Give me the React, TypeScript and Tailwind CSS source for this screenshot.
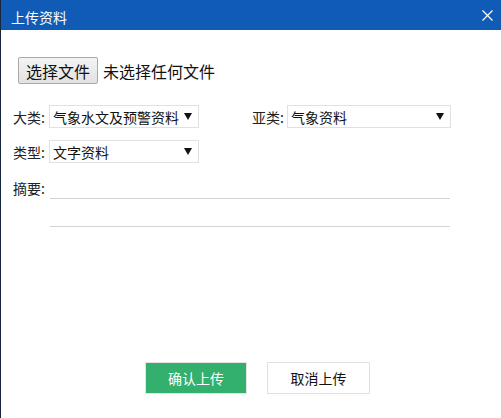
import React from "react";

const font = { fontFamily: '"Microsoft YaHei", "Noto Sans CJK SC", "Noto Sans", sans-serif' };

function Caret() {
  return (
    <svg width="8" height="7" viewBox="0 0 8 7" className="shrink-0">
      <path d="M0 0 L8 0 L4 7 Z" fill="#111" />
    </svg>
  );
}

function SelectBox({ value, width }: { value: string; width: string }) {
  return (
    <div
      className={`${width} h-[23px] border border-[#e1e1e1] bg-white flex items-center justify-between pl-[3px] pr-[6px] text-[14px] leading-none text-[#111]`}
    >
      <span>{value}</span>
      <Caret />
    </div>
  );
}

export default function App() {
  return (
    <div className="flex w-[501px] h-[418px] bg-white overflow-hidden" style={font}>
      <div className="w-px bg-[#17263d]" />
      <div className="flex-1 flex flex-col">
        <div className="h-[30px] bg-[#0f5bb5] flex items-center justify-between pl-[10px] pr-[8px] pt-[4px]">
          <span className="text-white text-[14px] leading-none">上传资料</span>
          <svg width="11" height="11" viewBox="0 0 11 11" className="-mt-[4px]">
            <path d="M0.5 0.5 L10.5 10.5 M10.5 0.5 L0.5 10.5" stroke="#fff" strokeWidth="1.2" />
          </svg>
        </div>

        <div className="flex-1 flex flex-col pl-[12px]">
          <div className="mt-[27px] flex items-center">
            <div className="ml-[5px] w-[80px] h-[27px] border border-[#a9a9a9] rounded-[2px] bg-gradient-to-b from-[#f4f4f4] to-[#e2e2e2] flex items-center justify-center text-[16px] leading-none text-[#111]">
              选择文件
            </div>
            <span className="ml-[5px] text-[16px] leading-none text-[#111]">未选择任何文件</span>
          </div>

          <div className="mt-[21px] flex items-center">
            <span className="w-[36px] text-[14px] leading-none text-[#222]">大类:</span>
            <SelectBox value="气象水文及预警资料" width="w-[150px]" />
            <span className="ml-[53px] w-[35px] text-[14px] leading-none text-[#222]">亚类:</span>
            <SelectBox value="气象资料" width="w-[164px]" />
          </div>

          <div className="mt-[12px] flex items-center">
            <span className="w-[36px] text-[14px] leading-none text-[#222]">类型:</span>
            <SelectBox value="文字资料" width="w-[150px]" />
          </div>

          <div className="mt-[17px] flex">
            <span className="w-[37px] text-[14px] leading-none text-[#222] pt-[1px]">摘要:</span>
            <div className="w-[400px] flex flex-col">
              <div className="h-[19px] border-b border-[#d3d3d3]" />
              <div className="h-[28px] border-b border-[#d3d3d3]" />
            </div>
          </div>

          <div className="mt-auto mb-[24px] flex items-center pl-[132px] gap-[20px]">
            <div className="w-[102px] h-[32px] bg-[#33b06d] border border-[#e4e4e4] flex items-center justify-center text-white text-[14px] leading-none">
              确认上传
            </div>
            <div className="w-[103px] h-[32px] bg-white border border-[#e1e1e1] flex items-center justify-center text-[#111] text-[14px] leading-none">
              取消上传
            </div>
          </div>
        </div>
      </div>
    </div>
  );
}
